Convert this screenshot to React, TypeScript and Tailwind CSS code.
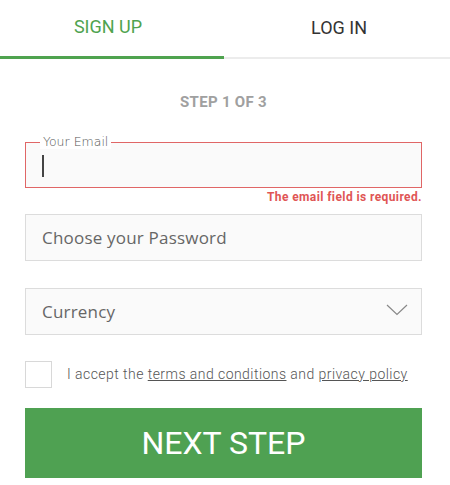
import { useState } from "react";

export default function App() {
  const [agree, setAgree] = useState(false);

  return (
    <div className="w-[450px] h-[485px] bg-white font-['Roboto',sans-serif] overflow-hidden">
      {/* TABS */}
      <div className="flex h-[59px]">
        <div className="w-[224px] flex items-center justify-center border-b-[3px] border-[#4fa34f] text-[#4fa34f] text-[18px] pb-[3px] pr-[8px]">
          SIGN UP
        </div>
        <div className="flex-1 flex items-center justify-center border-b-2 border-[#ececec] text-[#333] text-[18px] pb-[2px] pl-[4px]">
          LOG IN
        </div>
      </div>

      <div className="px-[25px] w-[447px]">
        {/* STEP */}
        <p className="text-center text-[15px] font-bold text-[#a0a0a0] mt-[35px] leading-[16px] tracking-[0.3px]">
          STEP 1 OF 3
        </p>

        {/* EMAIL */}
        <div className="relative mt-[32px] h-[46px] border border-[#e06666] bg-[#fafafa] flex items-center px-[16px]">
          <span className="absolute left-[14px] -top-[9px] bg-white px-[3px] text-[12.5px] leading-[15px] text-[#555] font-['DejaVu_Sans',sans-serif] font-light">
            Your Email
          </span>
          <span className="w-[1.5px] h-[22px] bg-[#444] mt-[2px]"></span>
        </div>
        <p className="text-right text-[12px] font-bold text-[#e05555] mt-[2px] leading-[14px] tracking-[0.4px]">
          The email field is required.
        </p>

        {/* PASSWORD */}
        <div className="mt-[10px] h-[47px] border border-[#dcdcdc] bg-[#fafafa] flex items-center px-[16px]">
          <span className="font-['Open_Sans',sans-serif] text-[17px] text-[#666] tracking-[0.2px]">
            Choose your Password
          </span>
        </div>

        {/* CURRENCY */}
        <div className="mt-[27px] h-[47px] border border-[#dcdcdc] bg-[#fafafa] flex items-center justify-between pl-[16px] pr-[13px]">
          <span className="font-['Open_Sans',sans-serif] text-[17px] text-[#666] tracking-[0.2px]">
            Currency
          </span>
          <svg width="22" height="12" viewBox="0 0 22 12" className="mt-[-4px]">
            <path d="M1 1 L11 10.5 L21 1" fill="none" stroke="#888" strokeWidth="1.2" />
          </svg>
        </div>

        {/* TERMS */}
        <div className="mt-[26px] flex items-center">
          <button
            onClick={() => setAgree(!agree)}
            className="w-[27px] h-[27px] border border-[#d8d8d8] bg-white shrink-0"
          >
            {agree ? "✓" : ""}
          </button>
          <p className="ml-[15px] text-[14px] text-[#555] font-light tracking-[0.45px] whitespace-nowrap">
            I accept the <span className="underline">terms and conditions</span> and{" "}
            <span className="underline">privacy policy</span>
          </p>
        </div>

        {/* BUTTON */}
        <button className="mt-[20px] w-full h-[70px] bg-[#4fa152] text-white text-[32px] flex items-center justify-center">
          NEXT STEP
        </button>
      </div>
    </div>
  );
}
